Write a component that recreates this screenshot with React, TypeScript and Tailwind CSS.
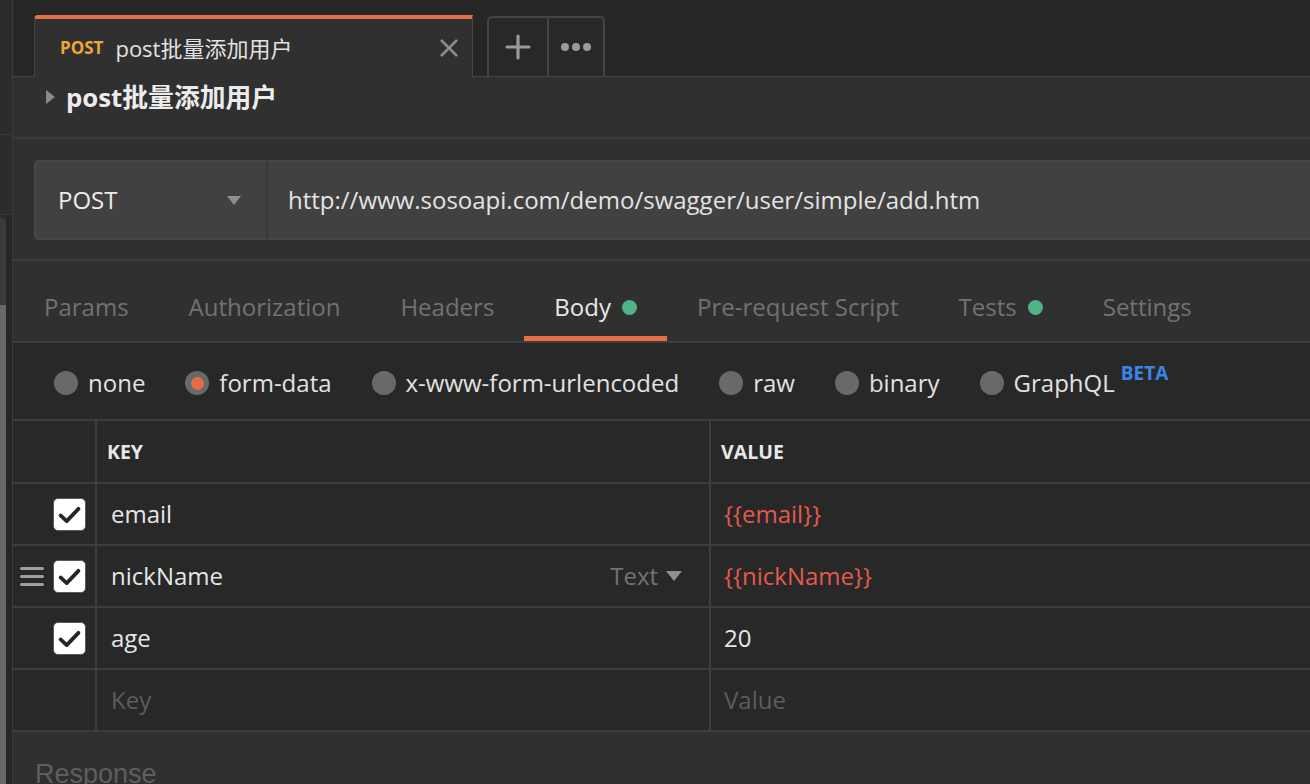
import React from "react";

const TABS = [
  { label: "Params" },
  { label: "Authorization" },
  { label: "Headers" },
  { label: "Body", dot: true, active: true },
  { label: "Pre-request Script" },
  { label: "Tests", dot: true },
  { label: "Settings" },
];

const BODY_TYPES = [
  { label: "none" },
  { label: "form-data", selected: true },
  { label: "x-www-form-urlencoded" },
  { label: "raw" },
  { label: "binary" },
  { label: "GraphQL", beta: true },
];

const ROWS = [
  { key: "email", value: "{{email}}", variable: true },
  { key: "nickName", value: "{{nickName}}", variable: true, hover: true },
  { key: "age", value: "20" },
];

function Check() {
  return (
    <div className="flex h-[33px] w-[33px] items-center justify-center rounded-[5px] border-[1.5px] border-[#5a5a5a] bg-white">
      <svg width="33" height="33" viewBox="0 0 33 33">
        <path d="M7 17.5 L13.5 23.5 L26 10.5" fill="none" stroke="#262626" strokeWidth="4" strokeLinecap="round" strokeLinejoin="round" />
      </svg>
    </div>
  );
}

function Sidebar() {
  return (
    <div className="flex w-[13px] shrink-0 flex-col border-r border-[#3b3b3b] bg-[#2c2c2c]">
      <div className="h-[135px] border-b border-[#3a3a3a]" />
      <div className="h-[80px] border-b border-[#3a3a3a]" />
      <div className="flex flex-1">
        <div className="flex w-[6px] flex-col pt-[3px]">
          <div className="h-[87px] rounded-tr-[4px] bg-[#3b3b3b]" />
          <div className="flex-1 bg-[#676767]" />
        </div>
        <div className="flex-1 bg-[#262626]" />
      </div>
    </div>
  );
}

function TabBar() {
  return (
    <div className="flex h-[77px] shrink-0 items-end bg-[#262626]">
      <div className="h-full w-[21px] border-b border-[#444]" />
      <div className="flex h-[62px] w-[439px] items-center rounded-tl-[4px] border-x-[1.5px] border-t-4 border-x-[#454545] border-t-[#e46f44] bg-[#303030] pl-[25px] pr-[13px]">
        <span className="text-[17px] font-bold text-[#eea53a]">POST</span>
        <span className="ml-[12px] text-[22px] text-[#e2e2e2]">post批量添加用户</span>
        <svg className="ml-auto" width="20" height="20" viewBox="0 0 20 20">
          <path d="M2 2 L18 18 M18 2 L2 18" stroke="#8c8c8c" strokeWidth="2.5" />
        </svg>
      </div>
      <div className="h-full w-[14px] border-b border-[#444]" />
      <div className="flex h-[61px] border-b border-[#444]">
        <div className="flex w-[60px] items-center justify-center rounded-tl-[5px] border-l-2 border-t-2 border-[#444] bg-[#282828]">
          <svg width="26" height="26" viewBox="0 0 26 26">
            <path d="M13 2 V24 M2 13 H24" stroke="#9a9a9a" strokeWidth="3.2" strokeLinecap="round" />
          </svg>
        </div>
        <div className="flex w-[58px] items-center justify-center gap-[3px] rounded-tr-[5px] border-x-2 border-t-2 border-[#444] bg-[#282828]">
          <span className="h-[8px] w-[8px] rounded-full bg-[#9a9a9a]" />
          <span className="h-[8px] w-[8px] rounded-full bg-[#9a9a9a]" />
          <span className="h-[8px] w-[8px] rounded-full bg-[#9a9a9a]" />
        </div>
      </div>
      <div className="h-full flex-1 border-b border-[#444]" />
    </div>
  );
}

export default function App() {
  return (
    <div className="flex h-[784px] w-[1310px] overflow-hidden bg-[#303030] font-['Open_Sans','Noto_Sans_CJK_SC',sans-serif]">
      <Sidebar />
      <div className="flex min-w-0 flex-1 flex-col">
        <TabBar />

        {/* request name */}
        <div className="flex h-[62px] shrink-0 items-center border-b-2 border-[#3a3a3a] pb-[20px] pl-[33px]">
          <svg width="9" height="14" viewBox="0 0 9 14">
            <path d="M0 0 L9 7 L0 14 Z" fill="#8a8a8a" />
          </svg>
          <span className="ml-[11px] text-[25.8px] font-bold text-[#ececec]">post批量添加用户</span>
        </div>

        {/* url bar */}
        <div className="shrink-0 border-b-2 border-[#3d3d3d] pb-[19px] pl-[21px] pt-[21px]">
          <div className="flex h-[80px]">
            <div className="flex w-[232px] items-center rounded-l-[5px] border-y-2 border-l-2 border-[#484848] bg-[#414141] pl-[22px] pr-[25px]">
              <span className="text-[24px] text-[#ececec]">POST</span>
              <svg className="ml-auto" width="14" height="9" viewBox="0 0 14 9">
                <path d="M0 0 H14 L7 9 Z" fill="#8f8f8f" />
              </svg>
            </div>
            <div className="w-[2px] bg-[#393939]" />
            <div className="flex flex-1 items-center border-y-2 border-[#484848] bg-[#414141] pl-[20px]">
              <span className="text-[24px] text-[#e4e4e4]">http://www.sosoapi.com/demo/swagger/user/simple/add.htm</span>
            </div>
          </div>
        </div>

        {/* tabs */}
        <div className="flex h-[82px] shrink-0 border-b-2 border-[#3d3d3d] pl-[1px]">
          {TABS.map((t) => (
            <div
              key={t.label}
              className={`flex h-full items-center border-b-[5px] px-[30px] pt-[17px] text-[24px] ${
                t.active ? "border-[#e46f44] text-[#e8e8e8]" : "border-transparent text-[#727272]"
              }`}
            >
              {t.label}
              {t.dot && <span className="ml-[11px] h-[15px] w-[15px] rounded-full bg-[#4fb387]" />}
            </div>
          ))}
        </div>

        {/* body types */}
        <div className="flex h-[78px] shrink-0 items-center gap-[40px] border-b-2 border-[#3d3d3d] bg-[#282828] pl-[41px] pt-[4px]">
          {BODY_TYPES.map((b) => (
            <div key={b.label} className="flex items-center gap-[10px]">
              <span className="flex h-[24px] w-[24px] items-center justify-center rounded-full bg-[#696969]">
                {b.selected && <span className="h-[13px] w-[13px] rounded-full bg-[#e46f44]" />}
              </span>
              <span className="text-[24px] text-[#e2e2e2]">{b.label}</span>
              {b.beta && (
                <span className="-ml-[4px] -mt-[20px] text-[19px] font-bold text-[#3a86e4]">BETA</span>
              )}
            </div>
          ))}
        </div>

        {/* form data table */}
        <div className="shrink-0 bg-[#282828]">
          <div className="flex h-[63px] border-b-2 border-[#3d3d3d]">
            <div className="w-[84px] border-r-2 border-[#3d3d3d]" />
            <div className="flex w-[614px] items-center border-r-2 border-[#3d3d3d] pl-[10px] text-[19.5px] font-bold text-[#e8e8e8]">KEY</div>
            <div className="flex flex-1 items-center pl-[10px] text-[19.5px] font-bold text-[#e8e8e8]">VALUE</div>
          </div>
          {ROWS.map((r) => (
            <div key={r.key} className="flex h-[62px] border-b-2 border-[#3d3d3d]">
              <div className="flex w-[84px] items-center border-r-2 border-[#3d3d3d] pl-[7px] pr-[9px]">
                {r.hover && (
                  <div className="flex w-[24px] flex-col gap-[5px]">
                    <span className="h-[3px] rounded-full bg-[#a0a0a0]" />
                    <span className="h-[3px] rounded-full bg-[#a0a0a0]" />
                    <span className="h-[3px] rounded-full bg-[#a0a0a0]" />
                  </div>
                )}
                <div className="ml-auto">
                  <Check />
                </div>
              </div>
              <div className="flex w-[614px] items-center border-r-2 border-[#3d3d3d] pl-[14px] pr-[27px] text-[24px] text-[#e6e6e6]">
                {r.key}
                {r.hover && (
                  <span className="ml-auto flex items-center gap-[8px] text-[#737373]">
                    Text
                    <svg width="16" height="10" viewBox="0 0 16 10">
                      <path d="M0 0 H16 L8 10 Z" fill="#8f8f8f" />
                    </svg>
                  </span>
                )}
              </div>
              <div className={`flex flex-1 items-center pl-[13px] text-[24px] ${r.variable ? "text-[#e35a4d]" : "text-[#e6e6e6]"}`}>
                {r.value}
              </div>
            </div>
          ))}
          <div className="flex h-[62px] border-b-2 border-[#3d3d3d]">
            <div className="w-[84px] border-r-2 border-[#3d3d3d]" />
            <div className="flex w-[614px] items-center border-r-2 border-[#3d3d3d] pl-[14px] text-[24px] text-[#5c5c5c]">Key</div>
            <div className="flex flex-1 items-center pl-[13px] text-[24px] text-[#5c5c5c]">Value</div>
          </div>
        </div>

        {/* response */}
        <div className="flex-1 pl-[22px] pt-[22px]">
          <span className="font-['Liberation_Sans',sans-serif] text-[27px] text-[#5e5e5e]">Response</span>
        </div>
      </div>
    </div>
  );
}
